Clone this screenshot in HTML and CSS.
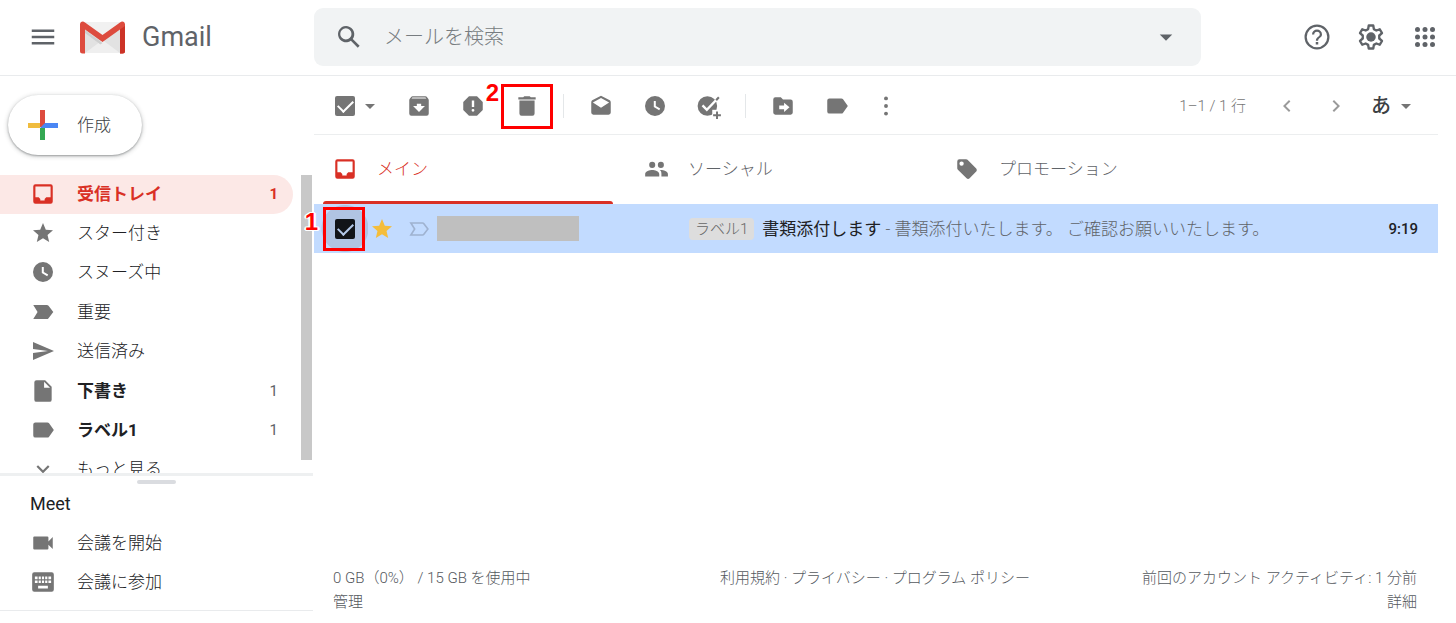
FILE: index.html
```html
<!DOCTYPE html>
<html lang="ja">
<head>
<meta charset="utf-8">
<title>Gmail</title>
<meta name="viewport" content="width=device-width, initial-scale=1">
<link rel="stylesheet" href="styles.css">
</head>
<body>
<svg class="sprite" aria-hidden="true">
  <symbol id="inbox" viewBox="0 0 24 24"><path fill-rule="evenodd" d="M19 3H5a2 2 0 0 0-2 2v14a2 2 0 0 0 2 2h14a2 2 0 0 0 2-2V5a2 2 0 0 0-2-2zm0 12h-4l-1.500 1.500V18h-4v-1.500L8 15H5V5h14z"/></symbol>
  <symbol id="star" viewBox="0 0 24 24"><path d="M12 17.270 18.180 21l-1.640-7.030L22 9.240l-7.190-.61L12 2 9.190 8.630 2 9.240l5.460 4.730L5.820 21z"/></symbol>
  <symbol id="clock" viewBox="0 0 24 24"><path fill-rule="evenodd" d="M12 2a10 10 0 1 0 0 20 10 10 0 0 0 0-20zm4.200 14.200L10.800 13V7h2v5l4.400 2.600z"/></symbol>
  <symbol id="important" viewBox="0 0 24 24"><path d="M3 18.500 7 12 3 5.500h12.500c.7 0 1.200.3 1.600.8L21.500 12l-4.400 5.700c-.4.5-.9.8-1.600.8z"/></symbol>
  <symbol id="send" viewBox="0 0 24 24"><path d="M2 21 23 12 2 3v7l15 2-15 2z"/></symbol>
  <symbol id="file" viewBox="0 0 24 24"><path fill-rule="evenodd" d="M6 2a2 2 0 0 0-2 2v16a2 2 0 0 0 2 2h12a2 2 0 0 0 2-2V8l-6-6zm7 7V3.500L18.500 9z"/></symbol>
  <symbol id="label" viewBox="0 0 24 24"><path d="M17.600 5.800C17.300 5.300 16.700 5 16 5H5a2 2 0 0 0-2 2v10a2 2 0 0 0 2 2h11c.7 0 1.300-.3 1.600-.8L22 12z"/></symbol>
  <symbol id="expand" viewBox="0 0 24 24"><path d="M16.600 8.600 12 13.200 7.400 8.600 6 10l6 6 6-6z"/></symbol>
  <symbol id="video" viewBox="0 0 24 24"><path d="M17 10.500V7a1 1 0 0 0-1-1H4a1 1 0 0 0-1 1v10a1 1 0 0 0 1 1h12a1 1 0 0 0 1-1v-3.500l4 4v-11z"/></symbol>
  <symbol id="keyboard" viewBox="0 0 24 24"><path fill-rule="evenodd" d="M20 3H4a2 2 0 0 0-2 2v14a2 2 0 0 0 2 2h16a2 2 0 0 0 2-2V5a2 2 0 0 0-2-2zM11 7h2v2.500h-2zm0 3.500h2V13h-2zM8 7h2v2.500H8zm0 3.500h2V13H8zM7 13H4.500v-2.500H7zm0-3.500H4.500V7H7zM16.500 18h-9v-2.500h9zM16 13h-2v-2.500h2zm0-3.500h-2V7h2zm3.500 3.500H17v-2.500h2.500zm0-3.500H17V7h2.500z"/></symbol>
  <symbol id="drop" viewBox="0 0 24 24"><path d="m7 10 5 5 5-5z"/></symbol>
  <symbol id="archive" viewBox="0 0 24 24"><path fill-rule="evenodd" d="m20.500 5.200-1.400-1.700C18.900 3.200 18.500 3 18 3H6c-.5 0-.9.2-1.200.6L3.500 5.200C3.200 5.600 3 6 3 6.500V19a2 2 0 0 0 2 2h14a2 2 0 0 0 2-2V6.500c0-.5-.2-.9-.5-1.300zM12 17.500 6.500 12H10v-2h4v2h3.500zM5.100 5l.8-.9h12l.9.9z"/></symbol>
  <symbol id="spam" viewBox="0 0 24 24"><path fill-rule="evenodd" d="M15.700 3H8.300L3 8.300v7.400L8.300 21h7.400l5.300-5.300V8.300zM12 17.300a1.300 1.300 0 1 1 0-2.600 1.300 1.300 0 0 1 0 2.600zm1.100-4.300h-2.200V7h2.200z"/></symbol>
  <symbol id="trash" viewBox="0 0 24 24"><path d="M5 19a2 2 0 0 0 2 2h10a2 2 0 0 0 2-2V7H5zM20 4h-4.500l-1-1h-5l-1 1H4v2h16z"/></symbol>
  <symbol id="read" viewBox="0 0 24 24"><path fill-rule="evenodd" d="M21 8.500c0-.7-.4-1.300-.9-1.700L12 2.500 3.900 6.800C3.400 7.200 3 7.800 3 8.500V18a2 2 0 0 0 2 2h14a2 2 0 0 0 2-2zM12 13.500 4.500 8.800 12 4.700l7.500 4.100z"/></symbol>
  <symbol id="task" viewBox="0 0 24 24"><circle cx="10.500" cy="12" r="9"/><path d="m6 11.500 4 4L21.500 3.500" fill="none" stroke="#fff" stroke-width="2.200"/><path d="m18.600 6.600 2.500-2.600" fill="none" stroke="currentColor" stroke-width="2"/><path d="M15 15.500h9V24h-9z" fill="#fff"/><path d="M18.500 17h1.800v2.600H23v1.800h-2.700V24h-1.800v-2.600h-2.700v-1.800h2.700z"/></symbol>
  <symbol id="move" viewBox="0 0 24 24"><path fill-rule="evenodd" d="M19 6h-7l-2-2H5a2 2 0 0 0-2 2v12a2 2 0 0 0 2 2h14a2 2 0 0 0 2-2V8a2 2 0 0 0-2-2zm-6 11.500V15H8.500v-3.500H13V9l5 4.250z"/></symbol>
  <symbol id="more" viewBox="0 0 24 24"><circle cx="12" cy="5" r="1.800"/><circle cx="12" cy="12" r="1.800"/><circle cx="12" cy="19" r="1.800"/></symbol>
  <symbol id="prev" viewBox="0 0 24 24"><path d="M15.400 7.400 14 6l-6 6 6 6 1.400-1.400L10.800 12z"/></symbol>
  <symbol id="next" viewBox="0 0 24 24"><path d="M10 6 8.600 7.400l4.600 4.600-4.600 4.600L10 18l6-6z"/></symbol>
  <symbol id="people" viewBox="0 0 24 24"><path d="M16.500 11a2.800 2.800 0 1 0 0-5.600 2.800 2.800 0 0 0 0 5.600zm-8 0a2.800 2.800 0 1 0 0-5.600 2.800 2.800 0 0 0 0 5.600zm0 2C6.200 13 2 14.200 2 16.500V19h13v-2.500c0-2.300-4.200-3.500-6.500-3.500zm8 0h-1c1.200.8 1.500 2 1.500 3.500V19h6v-2.500c0-2.300-4.200-3.500-6.500-3.500z"/></symbol>
  <symbol id="tag" viewBox="0 0 24 24"><path fill-rule="evenodd" d="m20.500 11.500-8-8c-.3-.3-.8-.5-1.300-.5H5a2 2 0 0 0-2 2v6.200c0 .5.200 1 .6 1.400l8 8c.8.7 2 .7 2.800 0l6.100-6.200c.7-.8.700-2.100 0-2.900zM7 9a2 2 0 1 1 0-4 2 2 0 0 1 0 4z"/></symbol>
</svg>

<header class="header">
  <div class="brand">
    <button class="icon-button" aria-label="メインメニュー"><svg class="icon icon-large" viewBox="0 0 24 24"><path d="M3 6h18v2H3zm0 5h18v2H3zm0 5h18v2H3z"/></svg></button>
    <a class="logo" href="#">
      <svg class="logo-mark" viewBox="0 0 45 33" aria-hidden="true">
        <path fill="#f1f1f1" d="M3 1h39v31H3z"/>
        <path fill="#e2e2e2" d="M5 8l17.500 12L40 8v24H5z"/>
        <path fill="#efefef" d="M5 32l17.500-13L40 32z"/>
        <path fill="#cfcfcf" d="M5 9l17.500 13-2 1.500L5 12z"/>
        <path fill="#dd4b3e" d="M0 3.500C0 .8 2.700-.3 5 1.400L22.500 14 40 1.400C42.300-.3 45 .8 45 3.500V30a2.500 2.500 0 0 1-2.500 2.500H40V8.500L22.500 21 5 8.500v24H2.500A2.500 2.500 0 0 1 0 30z"/>
        <path fill="#cc3327" d="M40 8.500 45 5v25a2.500 2.500 0 0 1-2.500 2.500H40z"/>
      </svg>
      <span>Gmail</span>
    </a>
  </div>
  <form class="search" role="search">
    <button class="icon-button" type="button" aria-label="検索"><svg class="icon icon-large" viewBox="0 0 24 24"><path d="M20.500 19 15 13.500a6.500 6.500 0 1 0-1.500 1.500l5.500 5.500zM9.500 14a4.500 4.500 0 1 1 0-9 4.500 4.500 0 0 1 0 9z"/></svg></button>
    <input class="search-input" type="text" placeholder="メールを検索" aria-label="メールを検索">
    <button class="icon-button" type="button" aria-label="検索オプション"><svg class="icon icon-large"><use href="#drop"/></svg></button>
  </form>
  <div class="header-actions">
    <button class="icon-button" aria-label="サポート"><svg class="icon icon-large" viewBox="0 0 24 24"><path d="M11 18h2v-2h-2zm1-16a10 10 0 1 0 0 20 10 10 0 0 0 0-20zm0 18.200a8.200 8.200 0 1 1 0-16.400 8.200 8.200 0 0 1 0 16.400zM12 6a4 4 0 0 0-4 4h1.800a2.200 2.200 0 1 1 4.400 0c0 2-3.100 1.800-3.100 5h1.800c0-2.300 3.100-2.500 3.100-5a4 4 0 0 0-4-4z"/></svg></button>
    <button class="icon-button" aria-label="設定"><svg class="icon icon-large" viewBox="0 0 24 24"><path d="M10.200 2.800h3.600l.5 2.900 2 1.100 2.700-1 1.800 3.100-2.200 1.900v2.400l2.200 1.900-1.800 3.100-2.700-1-2 1.100-.5 2.900h-3.600l-.5-2.900-2-1.100-2.700 1-1.800-3.100 2.200-1.900v-2.400L3.200 8.900 5 5.800l2.700 1 2-1.100z" fill="none" stroke="currentColor" stroke-width="1.900" stroke-linejoin="round"/><circle cx="12" cy="12" r="3.800"/></svg></button>
    <button class="icon-button" aria-label="アプリ"><svg class="icon icon-large" viewBox="0 0 24 24"><circle cx="6" cy="6" r="2"/><circle cx="12" cy="6" r="2"/><circle cx="18" cy="6" r="2"/><circle cx="6" cy="12" r="2"/><circle cx="12" cy="12" r="2"/><circle cx="18" cy="12" r="2"/><circle cx="6" cy="18" r="2"/><circle cx="12" cy="18" r="2"/><circle cx="18" cy="18" r="2"/></svg></button>
  </div>
</header>

<div class="layout">
  <aside class="sidebar">
    <button class="compose">
      <svg class="compose-plus" viewBox="0 0 30 30" aria-hidden="true"><path fill="#dd4b3e" d="M12 0h5v17h-5z"/><path fill="#f0bc3e" d="M0 13h12v5H0z"/><path fill="#34a853" d="M12 18h5v12h-5z"/><path fill="#4a86f4" d="M17 13h13v5H12z"/></svg>
      作成
    </button>
    <nav class="folders">
      <div class="folder-list">
        <a class="folder folder-active" href="#"><svg class="icon"><use href="#inbox"/></svg><span>受信トレイ</span><span class="count">1</span></a>
        <a class="folder" href="#"><svg class="icon icon-small"><use href="#star"/></svg><span>スター付き</span></a>
        <a class="folder" href="#"><svg class="icon icon-small"><use href="#clock"/></svg><span>スヌーズ中</span></a>
        <a class="folder" href="#"><svg class="icon"><use href="#important"/></svg><span>重要</span></a>
        <a class="folder" href="#"><svg class="icon icon-small"><use href="#send"/></svg><span>送信済み</span></a>
        <a class="folder folder-unread" href="#"><svg class="icon"><use href="#file"/></svg><span>下書き</span><span class="count">1</span></a>
        <a class="folder folder-unread" href="#"><svg class="icon"><use href="#label"/></svg><span>ラベル1</span><span class="count">1</span></a>
        <a class="folder" href="#"><svg class="icon"><use href="#expand"/></svg><span>もっと見る</span></a>
      </div>
      <div class="scroll-thumb"></div>
    </nav>
    <section class="meet">
      <div class="grip"></div>
      <h2 class="meet-title">Meet</h2>
      <a class="folder" href="#"><svg class="icon"><use href="#video"/></svg><span>会議を開始</span></a>
      <a class="folder" href="#"><svg class="icon"><use href="#keyboard"/></svg><span>会議に参加</span></a>
    </section>
  </aside>

  <main class="main">
    <div class="toolbar">
      <div class="select-all">
        <input class="check" type="checkbox" checked aria-label="すべて選択">
        <button class="caret" aria-label="選択"><svg class="icon icon-small"><use href="#drop"/></svg></button>
      </div>
      <button class="tool" aria-label="アーカイブ"><svg class="icon"><use href="#archive"/></svg></button>
      <button class="tool" aria-label="迷惑メールを報告"><svg class="icon"><use href="#spam"/></svg></button>
      <button class="tool" aria-label="削除"><svg class="icon"><use href="#trash"/></svg><span class="mark mark-delete"><b class="mark-number">2</b></span></button>
      <span class="divider"></span>
      <button class="tool" aria-label="未読にする"><svg class="icon"><use href="#read"/></svg></button>
      <button class="tool" aria-label="スヌーズ"><svg class="icon icon-small"><use href="#clock"/></svg></button>
      <button class="tool" aria-label="ToDo リストに追加"><svg class="icon"><use href="#task"/></svg></button>
      <span class="divider"></span>
      <button class="tool" aria-label="移動"><svg class="icon"><use href="#move"/></svg></button>
      <button class="tool" aria-label="ラベル"><svg class="icon"><use href="#label"/></svg></button>
      <button class="tool tool-narrow" aria-label="その他"><svg class="icon"><use href="#more"/></svg></button>
      <div class="pager">
        <span>1–1 / 1 行</span>
        <div class="pager-buttons">
          <button class="page-button" aria-label="前へ"><svg class="icon icon-small"><use href="#prev"/></svg></button>
          <button class="page-button" aria-label="次へ"><svg class="icon icon-small"><use href="#next"/></svg></button>
        </div>
        <button class="ime">あ<svg class="icon icon-small"><use href="#drop"/></svg></button>
      </div>
    </div>

    <div class="tabs" role="tablist">
      <button class="tab tab-active" role="tab" aria-selected="true"><svg class="icon"><use href="#inbox"/></svg>メイン</button>
      <button class="tab" role="tab"><svg class="icon"><use href="#people"/></svg>ソーシャル</button>
      <button class="tab" role="tab"><svg class="icon"><use href="#tag"/></svg>プロモーション</button>
    </div>

    <div class="mail">
      <div class="mail-check">
        <input class="check check-dark" type="checkbox" checked aria-label="書類添付しますを選択">
        <span class="mark mark-select"><b class="mark-number">1</b></span>
      </div>
      <button class="mail-star" aria-label="スター付き"><svg class="icon icon-small"><use href="#star"/></svg></button>
      <button class="mail-important" aria-label="重要"><svg class="icon" viewBox="0 0 24 24"><path d="M4.500 17.500 8 12 4.500 6.500h10.800c.5 0 .9.200 1.200.6l3.700 4.900-3.700 4.900c-.3.4-.7.6-1.200.6z" fill="none" stroke="currentColor" stroke-width="1.500"/></svg></button>
      <div class="sender"></div>
      <div class="mail-body"><span class="chip">ラベル1</span><span class="snippet"><b>書類添付します</b> - 書類添付いたします。 ご確認お願いいたします。</span></div>
      <time class="time">9:19</time>
    </div>

    <footer class="footer">
      <div>0 GB（0%） / 15 GB を使用中<br><a href="#">管理</a></div>
      <div><a href="#">利用規約</a> · <a href="#">プライバシー</a> · <a href="#">プログラム ポリシー</a></div>
      <div class="activity">前回のアカウント アクティビティ: 1 分前<br><a href="#">詳細</a></div>
    </footer>
  </main>
</div>
</body>
</html>
```
FILE: styles.css
```css
* { box-sizing: border-box; }

body {
  margin: 0;
  height: 100vh;
  display: flex;
  flex-direction: column;
  overflow: hidden;
  background: #fff;
  color: #202124;
  font: 300 17px/24px Roboto, "Noto Sans CJK JP", sans-serif;
}

button {
  border: 0;
  padding: 0;
  background: none;
  color: inherit;
  font: inherit;
  cursor: pointer;
}

a { color: inherit; text-decoration: none; }

.sprite { display: none; }

.icon {
  width: 26px;
  height: 26px;
  flex: none;
  display: block;
  fill: currentColor;
}
.icon-small { width: 24px; height: 24px; }
.icon-large { width: 30px; height: 30px; }

/* Header */
.header {
  flex: none;
  height: 76px;
  display: flex;
  align-items: center;
  padding-bottom: 1px;
  border-bottom: 1px solid #e9ebed;
  color: #5f6368;
}
.brand {
  width: 314px;
  flex: none;
  display: flex;
  align-items: center;
  gap: 22px;
  padding-left: 28px;
}
.logo {
  display: flex;
  align-items: center;
  gap: 17px;
  font-size: 27px;
  font-weight: 400;
}
.logo-mark { width: 45px; height: 33px; }
.search {
  flex: 1;
  height: 58px;
  display: flex;
  align-items: center;
  gap: 20px;
  padding: 0 20px;
  border-radius: 9px;
  background: #f1f3f4;
}
.search-input {
  flex: 1;
  min-width: 0;
  border: 0;
  padding: 0;
  outline: 0;
  background: none;
  color: #5f6368;
  font: inherit;
  font-size: 20px;
}
.search-input::placeholder { color: #777c80; opacity: 1; }
.header-actions {
  flex: none;
  width: 255px;
  display: flex;
  justify-content: flex-end;
  gap: 24px;
  padding-right: 16px;
}

/* Sidebar */
.layout { flex: 1; min-height: 0; display: flex; }
.sidebar {
  width: 314px;
  flex: none;
  display: flex;
  flex-direction: column;
  padding: 19px 1px 12px 0;
}
.compose {
  flex: none;
  align-self: flex-start;
  display: flex;
  align-items: center;
  gap: 19px;
  height: 60px;
  margin: 0 0 20px 8px;
  padding: 0 31px 0 20px;
  border-radius: 30px;
  box-shadow: 0 1px 2px rgba(60, 64, 67, .4), 0 1px 4px 1px rgba(60, 64, 67, .2);
  color: #3c4043;
}
.compose-plus { width: 30px; height: 30px; }
.folders {
  flex: 1;
  min-height: 0;
  overflow: hidden;
  display: flex;
  justify-content: space-between;
}
.folder-list {
  width: 293px;
  height: 315px;
  display: grid;
  grid-template-rows: repeat(8, 1fr);
}
.folder {
  display: flex;
  align-items: center;
  gap: 21px;
  padding: 0 15px 2px 30px;
  color: #202124;
}
.folder .icon { color: #757575; }
.folder .icon-small { margin: 0 1px; }
.folder-unread { font-weight: 700; }
.folder-active,
.folder-active .icon { color: #d93025; }
.folder-active {
  border-radius: 0 20px 20px 0;
  background: #fce8e6;
  font-weight: 700;
}
.count { margin-left: auto; font-size: 15px; }
.folder-unread .count { color: #5f6368; font-weight: 400; }
.scroll-thumb {
  width: 11px;
  height: 285px;
  margin-right: 1px;
  background: #c8c8c8;
}
.meet {
  flex: none;
  border-top: 3px solid #eef0f1;
  border-bottom: 1px solid #e9ebed;
  padding-bottom: 9px;
}
.meet .folder { height: 39px; padding-bottom: 0; }
.grip {
  width: 39px;
  height: 4px;
  margin: 4px auto 8px;
  border-radius: 2px;
  background: #dadce0;
}
.meet-title {
  margin: 0 0 7px;
  padding-left: 30px;
  font-size: 18px;
  font-weight: 400;
  line-height: 24px;
}

/* Toolbar */
.main {
  flex: 1;
  min-width: 0;
  display: flex;
  flex-direction: column;
  margin-right: 18px;
}
.toolbar {
  flex: none;
  height: 59px;
  display: flex;
  align-items: center;
  padding-top: 2px;
  border-bottom: 1px solid #eceeef;
  color: #757575;
}
.select-all {
  width: 78px;
  display: flex;
  align-items: center;
  gap: 3px;
  padding-left: 21px;
}
.tool {
  position: relative;
  width: 54px;
  height: 40px;
  display: grid;
  place-items: center;
}
.tool-narrow { width: 44px; }
.divider {
  width: 1px;
  height: 24px;
  margin: 0 10px 0 9px;
  background: #e4e7e9;
}
.check {
  flex: none;
  appearance: none;
  width: 20px;
  height: 20px;
  margin: 0;
  border-radius: 2px;
  background: #757575;
  display: grid;
  justify-items: center;
}
.check::after {
  content: "";
  width: 7px;
  height: 13px;
  margin-top: 1px;
  border: solid #fff;
  border-width: 0 2px 2px 0;
  transform: rotate(45deg);
}
.check-dark { background: #111418; }
.check-dark::after { border-color: #b3c8e8; }
.pager {
  margin-left: auto;
  display: flex;
  align-items: center;
  gap: 29px;
  padding-right: 20px;
  font-size: 15px;
}
.pager-buttons { display: flex; gap: 25px; color: #9a9a9a; }
.ime {
  display: flex;
  align-items: center;
  gap: 3px;
  margin-left: -6px;
  color: #3c4043;
  font-size: 20px;
  font-weight: 500;
}
.ime .icon { color: #757575; }

/* Numbered highlight frames */
.mark {
  position: absolute;
  border: 3px solid #f00;
}
.mark-number {
  position: absolute;
  right: 100%;
  top: 0;
  color: #f00;
  font: 700 24px/24px "Liberation Sans", sans-serif;
  text-shadow: 1px 1px #fff, -1px -1px #fff, 1px -1px #fff, -1px 1px #fff, 2px 0 #fff, -2px 0 #fff;
}
.mark-delete { inset: -2px 1px -3px; }
.mark-delete .mark-number { top: -6px; margin-right: 5px; }
.mark-select { inset: 3px 3px 2px 9px; }
.mark-select .mark-number { margin-right: 8px; }

/* Category tabs */
.tabs {
  flex: none;
  height: 69px;
  display: flex;
}
.tab {
  position: relative;
  flex: 0 1 311px;
  display: flex;
  align-items: center;
  gap: 19px;
  padding: 0 0 2px 18px;
  color: #5f6368;
}
.tab .icon { color: #757575; }
.tab-active,
.tab-active .icon { color: #d93025; }
.tab-active::after {
  content: "";
  position: absolute;
  inset: auto 12px 0 9px;
  height: 3px;
  border-radius: 3px 3px 0 0;
  background: #d93025;
}

/* Message row */
.mail {
  flex: none;
  height: 49px;
  display: flex;
  align-items: center;
  background: #c2dbff;
}
.mail-check {
  position: relative;
  align-self: stretch;
  width: 54px;
  display: flex;
  align-items: center;
  padding-left: 21px;
  background: radial-gradient(circle at 31px 50%, #b0c4e3 23px, transparent 24px);
}
.mail-star { margin-left: 2px; color: #f4bd3b; }
.mail-important { margin: 0 5px 0 12px; color: #9fb2d0; }
.sender { width: 142px; height: 25px; background: #bfbfbf; }
.mail-body {
  flex: 1;
  min-width: 0;
  display: flex;
  align-items: center;
  gap: 8px;
  margin-left: 110px;
  color: #5f6368;
  white-space: nowrap;
}
.chip {
  padding: 0 6px;
  border-radius: 4px;
  background: #ddd;
  color: #666;
  font-size: 15px;
  line-height: 22px;
}
.snippet { overflow: hidden; text-overflow: ellipsis; }
.snippet b { color: #202124; }
.time { padding: 0 20px; font-size: 15px; font-weight: 500; }

/* Footer */
.footer {
  margin-top: auto;
  display: grid;
  grid-template-columns: 1fr auto 1fr;
  padding: 0 21px 9px 19px;
  color: #55595e;
  font-size: 15px;
}
.activity { text-align: right; }
```
